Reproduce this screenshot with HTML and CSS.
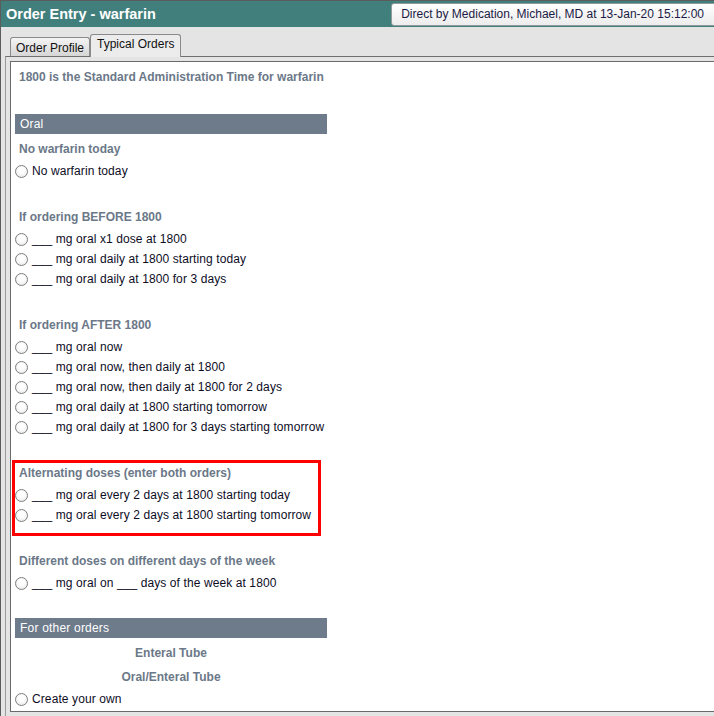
FILE: index.html
```html
<!DOCTYPE html>
<html>
<head>
<meta charset="utf-8">
<title>Order Entry - warfarin</title>
<link rel="stylesheet" href="styles.css">
</head>
<body>
<div class="window">
  <div class="titlebar">
    <h1 class="title">Order Entry - warfarin</h1>
    <div class="director">Direct by Medication, Michael, MD at 13-Jan-20 15:12:00</div>
  </div>
  <div class="tabs">
    <div class="tab">Order Profile</div>
    <div class="tab active">Typical Orders</div>
  </div>
  <div class="frame">
    <div class="panel">
      <div class="column">
        <div class="heading">1800 is the Standard Administration Time for warfarin</div>
        <div class="bar">Oral</div>
        <div class="label first">No warfarin today</div>
        <div class="item"><span class="radio"></span>No warfarin today</div>

        <div class="label spaced">If ordering BEFORE 1800</div>
        <div class="item"><span class="radio"></span>___ mg oral x1 dose at 1800</div>
        <div class="item"><span class="radio"></span>___ mg oral daily at 1800 starting today</div>
        <div class="item"><span class="radio"></span>___ mg oral daily at 1800 for 3 days</div>

        <div class="label spaced">If ordering AFTER 1800</div>
        <div class="item"><span class="radio"></span>___ mg oral now</div>
        <div class="item"><span class="radio"></span>___ mg oral now, then daily at 1800</div>
        <div class="item"><span class="radio"></span>___ mg oral now, then daily at 1800 for 2 days</div>
        <div class="item"><span class="radio"></span>___ mg oral daily at 1800 starting tomorrow</div>
        <div class="item"><span class="radio"></span>___ mg oral daily at 1800 for 3 days starting tomorrow</div>

        <div class="highlight">
          <div class="label boxed">Alternating doses (enter both orders)</div>
          <div class="item"><span class="radio"></span>___ mg oral every 2 days at 1800 starting today</div>
          <div class="item"><span class="radio"></span>___ mg oral every 2 days at 1800 starting tomorrow</div>
        </div>

        <div class="label after-box">Different doses on different days of the week</div>
        <div class="item"><span class="radio"></span>___ mg oral on ___ days of the week at 1800</div>

        <div class="bar bar-other">For other orders</div>
        <div class="center-label first-center">Enteral Tube</div>
        <div class="center-label">Oral/Enteral Tube</div>
        <div class="item"><span class="radio"></span>Create your own</div>
      </div>
    </div>
  </div>
</div>
</body>
</html>
```
FILE: styles.css
```css
html, body {
  margin: 0;
  padding: 0;
  background: #e4e4e4;
  font-family: "Liberation Sans", Arial, sans-serif;
  font-size: 12px;
  overflow: hidden;
}

.window {
  width: 714px;
  height: 716px;
  box-sizing: border-box;
  border-top: 1px solid #5c5c5c;
  border-left: 1px solid #5c5c5c;
  background: #e4e4e4;
  overflow: hidden;
}

.titlebar {
  height: 26px;
  background: #417f7d;
  display: flex;
  justify-content: space-between;
  align-items: flex-start;
}

.title {
  margin: 0;
  padding-left: 5px;
  font-size: 14.5px;
  font-weight: bold;
  color: #ffffff;
  line-height: 26px;
}

.director {
  flex-shrink: 0;
  margin-top: 2px;
  margin-right: -3px;
  height: 21px;
  line-height: 21px;
  padding: 0 12px 0 9px;
  background: linear-gradient(#ffffff, #ececec);
  border: 1px solid #8f9a9a;
  border-radius: 3px;
  color: #1b1b45;
  font-size: 12px;
}

.tabs {
  display: flex;
  align-items: flex-end;
  padding-left: 9px;
  height: 29px;
  position: relative;
  z-index: 1;
}

.tab {
  height: 19px;
  line-height: 20px;
  padding: 0 5px;
  box-sizing: border-box;
  border: 1px solid #8a8a8a;
  border-bottom: none;
  border-radius: 3px 3px 0 0;
  background: linear-gradient(#f4f4f4, #d6d6d6);
  color: #111;
  font-size: 12px;
}

.tab.active {
  height: 23px;
  line-height: 19px;
  margin-bottom: -1px;
  padding: 0 6px;
  background: #ececec;
  border-color: #8a8a8a;
}

.frame {
  margin-left: 4px;
  border-top: 1px solid #6e6e6e;
  border-left: 1px solid #9a9a9a;
  padding: 4px 0 0 4px;
  height: 660px;
}

.panel {
  background: #ffffff;
  border: 1px solid #6a6a6a;
  border-right: none;
  height: 649px;
  padding-left: 4px;
}

.column {
  width: 312px;
}

.heading {
  height: 30px;
  line-height: 30px;
  padding-left: 4px;
  margin-bottom: 22px;
  font-weight: bold;
  color: #6b7888;
  white-space: nowrap;
}

.bar {
  height: 20px;
  line-height: 20px;
  background: #6d7b8a;
  color: #ffffff;
  padding-left: 5px;
  letter-spacing: 0.2px;
}

.label {
  height: 23px;
  line-height: 22px;
  padding-left: 4px;
  font-weight: bold;
  color: #6b7888;
  white-space: nowrap;
}

.label.first {
  margin-top: 4px;
}

.label.spaced {
  margin-top: 25px;
}

.item {
  height: 20px;
  line-height: 20px;
  display: flex;
  align-items: center;
  color: #0d0d1f;
  white-space: nowrap;
  letter-spacing: 0.1px;
}

.radio {
  width: 11px;
  height: 11px;
  border: 1px solid #7e7e7e;
  border-radius: 50%;
  background: radial-gradient(circle at 50% 40%, #ffffff 30%, #e2e2e2 100%);
  margin-right: 4px;
  flex-shrink: 0;
}

.highlight {
  margin-top: 23px;
  margin-left: -3px;
  width: 303px;
  border: 3px solid #ff0000;
  padding-bottom: 8px;
}

.label.boxed {
  height: 22px;
  line-height: 20px;
}

.label.after-box {
  margin-top: 14px;
}

.bar-other {
  margin-top: 25px;
}

.center-label {
  height: 24px;
  line-height: 24px;
  text-align: center;
  font-weight: bold;
  color: #6b7888;
}

.center-label.first-center {
  margin-top: 3px;
}
```
